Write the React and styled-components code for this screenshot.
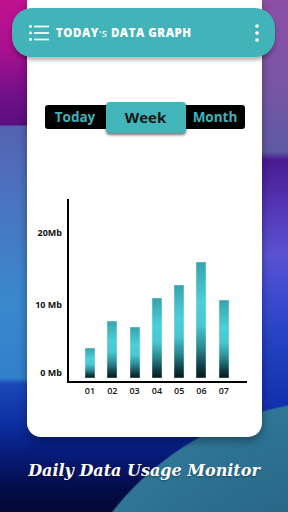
import React from 'react';
import styled, { createGlobalStyle } from 'styled-components';

const GlobalStyle = createGlobalStyle`
  html, body {
    margin: 0;
    padding: 0;
  }
  body {
    font-family: "Open Sans", "Liberation Sans", sans-serif;
    overflow: hidden;
  }
`;

// pozadí: dva boční pruhy, tmavý spodek a tyrkysový kruh vpravo dole
const Page = styled.div`
  width: 288px;
  height: 512px;
  display: flex;
  flex-direction: column;
  background:
    radial-gradient(circle 290px at 340px 690px, #255d7c 40%, #2f7697 99.4%, transparent 100%),
    linear-gradient(180deg,
      #c0128e 0, #a81090 50px, #72108a 95px, #5a0e80 125px,
      #5562b2 126px, #4a74c0 200px, #3a88cc 300px, #3080cc 378px,
      #1a48b8 384px, #0c2ea2 425px, #061a78 455px, #030c48 490px, #020832 512px)
      left top / 30px 100% no-repeat,
    linear-gradient(180deg,
      #8c4fa6 0, #7a55a6 80px, #5e5aa2 152px, #4a1a92 160px, #5538b8 210px,
      #5a52d2 255px, #3a4ad0 300px, #2040c0 350px, #1232b0 400px, #0c2aa0 430px)
      right top / 30px 100% no-repeat,
    linear-gradient(180deg, #0c2ea2 420px, #061a78 455px, #030c48 490px, #020832 512px);
`;

const Card = styled.main`
  margin: 0 26px 0 27px;
  height: 437px;
  flex-shrink: 0;
  box-sizing: border-box;
  padding-top: 8px;
  background: #fff;
  border-radius: 0 0 14px 14px;
  box-shadow: 0 4px 10px rgba(0, 0, 0, 0.35);
  display: flex;
  flex-direction: column;
  align-items: center;
`;

const Toolbar = styled.header`
  align-self: stretch;
  margin: 0 -13px 0 -15px;
  height: 49px;
  box-sizing: border-box;
  padding: 0 16px 0 17px;
  background: #41b3b9;
  border-radius: 20px;
  box-shadow: 0 3px 4px rgba(0, 0, 0, 0.3);
  display: flex;
  align-items: center;
  color: #fff;
`;

const Title = styled.h1`
  flex: 1;
  margin: 0 0 0 7px;
  font-family: "Open Sans", "Liberation Sans", sans-serif;
  font-weight: 800;
  font-size: 11.5px;
  letter-spacing: 0.5px;
  white-space: nowrap;
`;

const Small = styled.span`
  font-size: 9.5px;
  font-weight: 600;
`;

const Segmented = styled.div`
  margin-top: 48px;
  width: 200px;
  height: 24px;
  background: #000;
  border-radius: 3px;
  display: flex;
  align-items: center;
`;

const Tab = styled.div`
  width: ${(p) => p.$w}px;
  height: ${(p) => (p.$active ? 31 : 24)}px;
  flex-shrink: 0;
  display: flex;
  align-items: center;
  justify-content: center;
  font-family: "Open Sans", sans-serif;
  font-weight: 700;
  font-size: ${(p) => (p.$active ? 15 : 13.5)}px;
  color: ${(p) => (p.$active ? '#151515' : '#3fb3b9')};
  background: ${(p) => (p.$active ? '#41b5ba' : 'transparent')};
  border-radius: 4px;
  box-shadow: ${(p) => (p.$active ? '0 2px 3px rgba(0,0,0,0.55)' : 'none')};
`;

const Chart = styled.section`
  align-self: flex-start;
  margin-top: 70px;
  display: flex;
  flex-direction: column;
`;

const ChartRow = styled.div`
  display: flex;
`;

const Scale = styled.div`
  width: 40px;
  box-sizing: border-box;
  padding: 28px 5px 0 0;
  display: flex;
  flex-direction: column;
  align-items: flex-end;
`;

const ScaleLabel = styled.span`
  margin-top: ${(p) => p.$gap}px;
  font-size: 9px;
  line-height: 12px;
  font-weight: 700;
  color: #111;
  white-space: nowrap;
`;

const Plot = styled.div`
  width: 180px;
  height: 184px;
  box-sizing: border-box;
  border-left: 2px solid #000;
  border-bottom: 2px solid #000;
  padding: 0 0 3px 16px;
  display: flex;
  align-items: flex-end;
  gap: 12.3px;
`;

const Bar = styled.div`
  width: 10px;
  height: ${(p) => p.$h}px;
  background: linear-gradient(180deg,
    #37a3ae 0%, #4ccfd9 35%, #47c7d1 55%, #2a8992 74%, #0c3a41 91%, #04181c 100%);
  box-shadow: inset 0 0 0 0.5px rgba(255, 255, 255, 0.4);
`;

const Days = styled.div`
  margin-left: 40px;
  padding: 2px 0 0 18px;
  display: flex;
  gap: 12.3px;
`;

const Day = styled.span`
  width: 10px;
  display: flex;
  justify-content: center;
  font-size: 9px;
  line-height: 12px;
  font-weight: 600;
  color: #111;
`;

const Footer = styled.footer`
  flex: 1;
  display: flex;
  align-items: center;
  justify-content: center;
  padding-bottom: 8px;
`;

const Slogan = styled.h2`
  margin: 0;
  font-family: "DejaVu Serif", "Liberation Serif", serif;
  font-style: italic;
  font-weight: 700;
  font-size: 16px;
  letter-spacing: 0;
  color: #fff;
  text-shadow: 0 1px 2px rgba(0, 0, 0, 0.4);
  white-space: nowrap;
`;

const MenuIcon = () => (
  <svg width="20" height="16" viewBox="0 0 20 16">
    {[1.5, 8, 14.5].map((y) => (
      <g key={y}>
        <circle cx="1.5" cy={y} r="1.4" fill="#fff" />
        <line x1="5" y1={y} x2="20" y2={y} stroke="#fff" strokeWidth="1.7" />
      </g>
    ))}
  </svg>
);

const MoreIcon = () => (
  <svg width="4" height="18" viewBox="0 0 4 18">
    {[2, 9, 16].map((y) => (
      <circle key={y} cx="2" cy={y} r="1.8" fill="#fff" />
    ))}
  </svg>
);

const bars = [30, 57, 51, 80, 93, 116, 78];
const days = ['01', '02', '03', '04', '05', '06', '07'];

const App = () => (
  <Page>
    <GlobalStyle />
    <Card>
      <Toolbar>
        <MenuIcon />
        <Title>
          TODAY<Small>'S</Small> DATA GRAPH
        </Title>
        <MoreIcon />
      </Toolbar>

      <Segmented>
        <Tab $w={61}>Today</Tab>
        <Tab $w={80} $active>Week</Tab>
        <Tab $w={59}>Month</Tab>
      </Segmented>

      <Chart>
        <ChartRow>
          <Scale>
            <ScaleLabel $gap={0}>20Mb</ScaleLabel>
            <ScaleLabel $gap={60}>10 Mb</ScaleLabel>
            <ScaleLabel $gap={56}>0 Mb</ScaleLabel>
          </Scale>
          <Plot>
            {bars.map((h, i) => (
              <Bar key={i} $h={h} />
            ))}
          </Plot>
        </ChartRow>
        <Days>
          {days.map((d) => (
            <Day key={d}>{d}</Day>
          ))}
        </Days>
      </Chart>
    </Card>
    <Footer>
      <Slogan>Daily Data Usage Monitor</Slogan>
    </Footer>
  </Page>
);

export default App;
